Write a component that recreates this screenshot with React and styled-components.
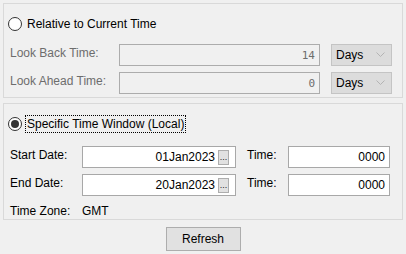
import React from 'react';
import styled, { createGlobalStyle } from 'styled-components';

const GlobalStyle = createGlobalStyle`
    html, body {
        margin: 0;
        background: #f0f0f0;
        font-family: "Liberation Sans", Arial, sans-serif;
        font-size: 12px;
        color: #000;
    }
`

const Page = styled.div`
    width: 406px;
    height: 254px;
    box-sizing: border-box;
    padding: 3px 3px 0 3px;
    display: flex;
    flex-direction: column;
`

const Panel = styled.div`
    border: 1px solid #d9d9d9;
    padding: ${p => p.$pad};
    display: flex;
    flex-direction: column;
    height: ${p => p.$height}px;
    box-sizing: border-box;
    margin-bottom: ${p => p.$gap || 0}px;
`

const RadioRow = styled.label`
    display: flex;
    align-items: center;
    height: 18px;
    margin-left: -2px;
    margin-bottom: ${p => p.$after}px;
`

const RadioDot = styled.span`
    width: 12px;
    height: 12px;
    border: 1px solid #333;
    border-radius: 50%;
    background: #fff;
    display: flex;
    align-items: center;
    justify-content: center;
    margin-right: 3px;
    &::after {
        content: '';
        display: ${p => (p.$checked ? 'block' : 'none')};
        width: 8px;
        height: 8px;
        border-radius: 50%;
        background: #333;
    }
`

const RadioText = styled.span`
    padding: 1px 1px;
    border: 1px dotted ${p => (p.$focus ? '#000' : 'transparent')};
    line-height: 14px;
`

const Row = styled.div`
    display: flex;
    align-items: center;
    height: 22px;
    margin-bottom: ${p => p.$after || 0}px;
`

const Label = styled.span`
    width: ${p => p.$width}px;
    flex: none;
    color: ${p => (p.$disabled ? '#6d6d6d' : '#000')};
    margin-top: -4px;
    margin-left: ${p => p.$left || 0}px;
`

const Field = styled.div`
    width: ${p => p.$width}px;
    height: 22px;
    box-sizing: border-box;
    border: 1px solid ${p => (p.$disabled ? '#acacac' : '#a8a8a8')};
    background: ${p => (p.$disabled ? '#f0f0f0' : '#fff')};
    display: flex;
    align-items: center;
    justify-content: flex-end;
    padding: 0 ${p => p.$padRight || 4}px 0 4px;
    flex: none;
`

const MonoValue = styled.span`
    font-family: "DejaVu Sans Mono", "Liberation Mono", monospace;
    font-size: 11px;
    color: #6d6d6d;
`

const DateValue = styled.span`
    color: #000;
    margin-right: 3px;
`

const TimeValue = styled.span`
    color: #000;
`

const DotsButton = styled.span`
    width: 11px;
    height: 15px;
    box-sizing: border-box;
    border: 1px solid #adadad;
    background: #e1e1e1;
    font-size: 9px;
    line-height: 12px;
    text-align: center;
    color: #222;
`

const Select = styled.div`
    width: 61px;
    height: 22px;
    box-sizing: border-box;
    margin-left: 11px;
    border: 1px solid #c4c4c4;
    background: #dcdcdc;
    display: flex;
    align-items: center;
    justify-content: space-between;
    padding: 0 6px 0 4px;
`

const Chevron = () => (
    <svg width="9" height="6" viewBox="0 0 9 6">
        <path d="M0.5 0.5 L4.5 4.5 L8.5 0.5" fill="none" stroke="#b4b4b4" strokeWidth="1" />
    </svg>
)

const ZoneRow = styled.div`
    display: flex;
    align-items: center;
    height: 14px;
    margin-top: 1px;
`

const ZoneLabel = styled.span`
    width: 72px;
    flex: none;
`

const Footer = styled.div`
    display: flex;
    justify-content: center;
    padding-top: 7px;
`

const Button = styled.button`
    width: 75px;
    height: 24px;
    border: 1px solid #adadad;
    background: #e1e1e1;
    font-family: "Liberation Sans", Arial, sans-serif;
    font-size: 12px;
    color: #000;
    padding: 0;
`

const App = () => {
    return (<Page>
        <GlobalStyle />
        <Panel $pad="11px 6px 1px 6px" $height={95} $gap={5}>
            <RadioRow $after={11}>
                <RadioDot />
                <RadioText>Relative to Current Time</RadioText>
            </RadioRow>
            <Row $after={6}>
                <Label $width={109} $disabled>Look Back Time:</Label>
                <Field $width={201} $disabled><MonoValue>14</MonoValue></Field>
                <Select>Days<Chevron /></Select>
            </Row>
            <Row>
                <Label $width={109} $disabled>Look Ahead Time:</Label>
                <Field $width={201} $disabled><MonoValue>0</MonoValue></Field>
                <Select>Days<Chevron /></Select>
            </Row>
        </Panel>
        <Panel $pad="11px 6px 0 6px" $height={117}>
            <RadioRow $after={13}>
                <RadioDot $checked />
                <RadioText $focus>Specific Time Window (Local)</RadioText>
            </RadioRow>
            <Row $after={6}>
                <Label $width={72}>Start Date:</Label>
                <Field $width={154} $padRight={6}>
                    <DateValue>01Jan2023</DateValue>
                    <DotsButton>...</DotsButton>
                </Field>
                <Label $width={41} $left={11}>Time:</Label>
                <Field $width={102}><TimeValue>0000</TimeValue></Field>
            </Row>
            <Row $after={7}>
                <Label $width={72}>End Date:</Label>
                <Field $width={154} $padRight={6}>
                    <DateValue>20Jan2023</DateValue>
                    <DotsButton>...</DotsButton>
                </Field>
                <Label $width={41} $left={11}>Time:</Label>
                <Field $width={102}><TimeValue>0000</TimeValue></Field>
            </Row>
            <ZoneRow>
                <ZoneLabel>Time Zone:</ZoneLabel>
                <span>GMT</span>
            </ZoneRow>
        </Panel>
        <Footer>
            <Button>Refresh</Button>
        </Footer>
    </Page>);
}

export default App;
